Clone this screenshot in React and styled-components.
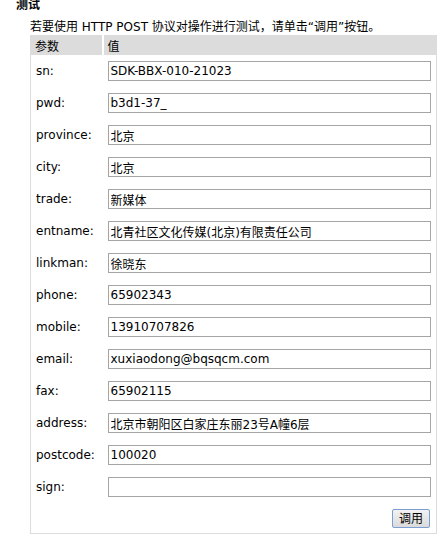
import React from 'react'
import styled, { createGlobalStyle } from 'styled-components'

const GlobalStyle = createGlobalStyle`
    body {
        margin: 0;
        background: #ffffff;
        color: #000000;
        font-family: "DejaVu Sans", Verdana, "Noto Sans CJK SC", sans-serif;
        overflow: hidden;
    }
`

const Content = styled.div`
    margin-left: 30px;
    margin-top: -1px;
    font-size: 12px;
`

const Heading = styled.h3`
    margin: 0 0 0 -14px;
    font-size: 12px;
    line-height: 13px;
    font-weight: bold;
`

const Intro = styled.p`
    margin: 8px 0 0 0;
    line-height: 15px;
    white-space: nowrap;
`

const Table = styled.table`
    width: 407px;
    border-collapse: collapse;
    border: 1px solid #dcdcdc;
    border-top: none;
    table-layout: fixed;
`

const HeadCell = styled.td`
    background: #dcdcdc;
    height: 20px;
    padding: 0 0 0 4px;
    box-sizing: border-box;
    vertical-align: middle;
    border-right: ${props => (props.$sep ? '2px solid #ffffff' : 'none')};
    width: ${props => (props.$sep ? '72px' : 'auto')};
`

const LabelCell = styled.td`
    height: 32px;
    padding: 0 0 0 5px;
    box-sizing: border-box;
    vertical-align: middle;
    white-space: nowrap;
`

const InputCell = styled.td`
    height: 32px;
    padding: 0 0 0 5px;
    box-sizing: border-box;
    vertical-align: middle;
    text-align: ${props => (props.$right ? 'right' : 'left')};
    padding-right: ${props => (props.$right ? '6px' : '0')};
`

const Field = styled.input`
    display: block;
    width: 323px;
    height: 20px;
    box-sizing: border-box;
    margin: 0;
    padding: 0 2px;
    border: 1px solid #a5a5a5;
    font: inherit;
    font-size: 12px;
    color: #000000;
    background: #ffffff;
    outline: none;
`

const Button = styled.button`
    display: inline-block;
    width: 38px;
    height: 19px;
    margin: 6px 0 5px 0;
    padding: 0;
    box-sizing: border-box;
    border: 1px solid #7c9fd3;
    border-radius: 2px;
    background: linear-gradient(#f2f2f2, #dadada);
    font: inherit;
    font-size: 12px;
    line-height: 16px;
    color: #000000;
`

const fields = [
    ['sn', 'SDK-BBX-010-21023'],
    ['pwd', 'b3d1-37_'],
    ['province', '北京'],
    ['city', '北京'],
    ['trade', '新媒体'],
    ['entname', '北青社区文化传媒(北京)有限责任公司'],
    ['linkman', '徐晓东'],
    ['phone', '65902343'],
    ['mobile', '13910707826'],
    ['email', 'xuxiaodong@bqsqcm.com'],
    ['fax', '65902115'],
    ['address', '北京市朝阳区白家庄东丽23号A幢6层'],
    ['postcode', '100020'],
    ['sign', ''],
]

export default function App() {
    return (
        <>
            <GlobalStyle />
            <Content>
                <Heading>测试</Heading>
                <Intro>若要使用 HTTP POST 协议对操作进行测试，请单击“调用”按钮。</Intro>
                <Table>
                    <tbody>
                        <tr>
                            <HeadCell $sep>参数</HeadCell>
                            <HeadCell>值</HeadCell>
                        </tr>
                        {fields.map(([name, value]) => (
                            <tr key={name}>
                                <LabelCell>{name}:</LabelCell>
                                <InputCell>
                                    <Field type="text" name={name} defaultValue={value} />
                                </InputCell>
                            </tr>
                        ))}
                        <tr>
                            <LabelCell style={{ height: 'auto' }}></LabelCell>
                            <InputCell $right style={{ height: 'auto' }}>
                                <Button type="submit">调用</Button>
                            </InputCell>
                        </tr>
                    </tbody>
                </Table>
            </Content>
        </>
    )
}
